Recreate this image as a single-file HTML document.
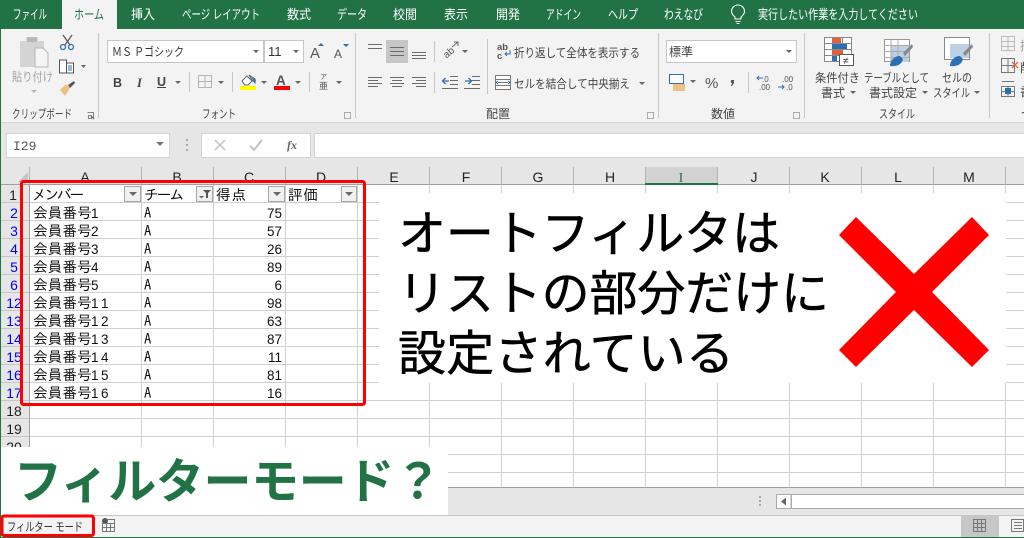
<!DOCTYPE html>
<html lang="ja"><head><meta charset="utf-8"><title>フィルターモード</title>
<style>
html,body{margin:0;padding:0;background:#fff;width:1024px;height:538px;overflow:hidden}
svg{display:block}
text{font-family:"Liberation Sans","Noto Sans CJK JP",sans-serif;white-space:pre}
.u{font-size:12px;fill:#444}
.g{fill:#a3a3a3}
.t{font-size:13px;fill:#fff}
.c{font-family:"IPAGothic","Noto Sans CJK JP",sans-serif;font-size:14.67px;fill:#111}
.d{font-family:"Liberation Sans",sans-serif;font-size:13.5px}
.h{font-family:"Liberation Sans",sans-serif;font-size:14px;fill:#222;text-anchor:middle}
.r{font-family:"Liberation Sans",sans-serif;font-size:14px;fill:#222;text-anchor:middle}
.b{fill:#0000ff}
.n{text-anchor:end}
.big{font-family:"Noto Sans CJK JP",sans-serif;font-size:48px;font-weight:400;fill:#000;stroke:#000;stroke-width:.5px}
.sep{stroke:#c6c6c6;stroke-width:1;fill:none}
.ic{stroke:#6a6a6a;stroke-width:1;fill:none}
.grid{stroke:#d0d0d0;stroke-width:1;fill:none}
</style></head><body>
<svg xmlns="http://www.w3.org/2000/svg" width="1024" height="538" viewBox="0 0 1024 538">
<!-- base -->
<rect width="1024" height="538" fill="#fff"/>
<rect x="0" y="29" width="1024" height="93" fill="#f3f3f3"/>
<rect x="0" y="122" width="1024" height="62" fill="#e6e6e6"/>
<rect x="0" y="122" width="1024" height="1" fill="#d2d2d2"/>
<!-- title tabs -->
<rect width="1024" height="29" fill="#217346"/>
<rect x="62" y="0" width="55" height="29" fill="#f3f3f3"/>
<text class="t" x="13" y="19" textLength="34" lengthAdjust="spacingAndGlyphs">ファイル</text>
<text class="t" x="74" y="19" textLength="30" lengthAdjust="spacingAndGlyphs" style="fill:#217346">ホーム</text>
<text class="t" x="131" y="19" textLength="24" lengthAdjust="spacingAndGlyphs">挿入</text>
<text class="t" x="182" y="19" textLength="78" lengthAdjust="spacingAndGlyphs">ページ レイアウト</text>
<text class="t" x="287" y="19" textLength="24" lengthAdjust="spacingAndGlyphs">数式</text>
<text class="t" x="337" y="19" textLength="30" lengthAdjust="spacingAndGlyphs">データ</text>
<text class="t" x="393" y="19" textLength="24" lengthAdjust="spacingAndGlyphs">校閲</text>
<text class="t" x="444" y="19" textLength="24" lengthAdjust="spacingAndGlyphs">表示</text>
<text class="t" x="496" y="19" textLength="24" lengthAdjust="spacingAndGlyphs">開発</text>
<text class="t" x="546" y="19" textLength="35" lengthAdjust="spacingAndGlyphs">アドイン</text>
<text class="t" x="608" y="19" textLength="30" lengthAdjust="spacingAndGlyphs">ヘルプ</text>
<text class="t" x="664" y="19" textLength="39" lengthAdjust="spacingAndGlyphs">わえなび</text>
<path d="M735 17c-2.500-2-3.500-3.500-3.500-5.500a6.500 6.500 0 0 1 13 0c0 2-1 3.500-3.500 5.500v2h-6zM735.500 21.500h5M736.500 23.500h3" stroke="#fff" fill="none" stroke-width="1.100"/>
<text class="t" x="758" y="19" textLength="160" lengthAdjust="spacingAndGlyphs">実行したい作業を入力してください</text>

<!-- separators -->
<path class="sep" d="M98.500 33v85M355.500 33v85M658.500 33v85M804.500 33v85M989.500 33v85M189.500 72v20M232.500 72v20M309.500 72v20M434.500 41v21M434.500 72v21M487.500 39v55M748.500 72v21"/>

<!-- clipboard -->
<path d="M20 41h6v-3h12v3h6v26H20z" fill="#d4d4d4"/>
<rect x="27" y="37" width="10" height="5" fill="#b8b8b8"/>
<path d="M35 48h8l5 5v14H35z" fill="#f5f5f5" stroke="#b4b4b4"/>
<text class="u g" x="12" y="81" textLength="41" lengthAdjust="spacingAndGlyphs">貼り付け</text>
<path d="M31 90h6l-3 3z" fill="#b5b5b5"/>
<path d="M63 35l7 10M72 35l-7 10" stroke="#5b5b5b" stroke-width="1.300" fill="none"/>
<circle cx="63" cy="47" r="2.500" fill="none" stroke="#2b70b5" stroke-width="1.300"/><circle cx="71" cy="47" r="2.500" fill="none" stroke="#2b70b5" stroke-width="1.300"/>
<path d="M59.500 60h7v13h-7zM66.500 63h7v10h-7z" fill="#fff" stroke="#555"/>
<path d="M68 66h4M68 68h4M68 70h4" stroke="#2b70b5"/>
<path d="M81 65h5l-2.500 3z" fill="#666"/>
<path d="M60 90l6-6 4 4-5 8z" fill="#eec084"/><path d="M68 85l6-4 1 2-5 5z" fill="#555"/>

<text class="u" x="12" y="118" textLength="60" lengthAdjust="spacingAndGlyphs">クリップボード</text>
<path d="M87.500 112.500h6v6M88.500 115.500h3v3h-3z" fill="none" stroke="#888"/>
<path d="M91 116l3 3" stroke="#555"/>

<!-- font -->
<rect x="107.500" y="40.500" width="156" height="22" fill="#fff" stroke="#c6c6c6"/>
<rect x="264.500" y="40.500" width="39" height="22" fill="#fff" stroke="#c6c6c6"/>
<text x="112" y="56" font-size="12" fill="#333" textLength="72" lengthAdjust="spacingAndGlyphs" style="font-family:'Noto Sans CJK JP',sans-serif">ＭＳ Ｐゴシック</text>
<path d="M253 50h6l-3 3zM293 50h6l-3 3z" fill="#666"/>
<text x="268" y="56" font-size="13" fill="#333" style="font-family:'Liberation Sans',sans-serif">11</text>
<text x="310" y="58" font-size="15" fill="#555">A</text><path d="M318 46l3-3 3 3z" fill="#2b70b5"/>
<text x="334" y="58" font-size="12" fill="#555">A</text><path d="M343 44l3 3 3-3z" fill="#2b70b5"/>
<text x="113" y="87" font-size="12.500" font-weight="bold" fill="#444">B</text>
<text x="137" y="87" font-size="12.500" font-weight="bold" font-style="italic" fill="#444" style="font-family:'Liberation Serif',serif">I</text>
<text x="157" y="86" font-size="12.500" font-weight="bold" fill="#444">U</text><rect x="157" y="87" width="9" height="1" fill="#444"/>
<path d="M175 81h6l-3 3zM218 81h6l-3 3zM261 81h6l-3 3zM295 81h6l-3 3zM336 81h6l-3 3z" fill="#666"/>
<path d="M198.500 75.500h13v12h-13zM205 75.500v12M198.500 81.500h13" fill="none" stroke="#777" stroke-dasharray="1 1"/>
<path d="M242 81l5-5 5 5-4 4h-3zM249 75l6 4v4l-3-3z" fill="#fff" stroke="#666"/><path d="M251 77l5 3-1 3z" fill="#2b70b5"/>
<rect x="240" y="86" width="16" height="4" fill="#ffff00"/>
<text x="276" y="85" font-size="13.500" font-weight="bold" fill="#555">A</text>
<rect x="274" y="86" width="16" height="4" fill="#ff0000"/>
<text x="320" y="79" font-size="7" fill="#555">ア</text><text x="319" y="89" font-size="9" fill="#555">亜</text>
<text class="u" x="202" y="118" textLength="34" lengthAdjust="spacingAndGlyphs">フォント</text>
<path d="M344.500 112.500h6v6h-6z" fill="none" stroke="#aaa"/>

<!-- alignment -->
<rect x="386" y="40" width="22" height="23" fill="#c6c6c6"/>
<path class="ic" d="M368 44.500h14M368 48.500h14M390 47.500h14M390 51.500h14M390 55.500h14M412 52.500h14M412 55.500h14M412 58.500h14"/>
<path class="ic" d="M368 77.500h14M368 80.500h10M368 83.500h14M368 86.500h10M390 77.500h14M392 80.500h10M390 83.500h14M392 86.500h10M412 77.500h14M416 80.500h10M412 83.500h14M416 86.500h10"/>
<text x="443" y="57" font-size="10" fill="#555" transform="rotate(-40 447 53)">ab</text>
<path d="M452 47l6-5M454 42h4v4" stroke="#666" fill="none"/>
<path d="M462 50h6l-3 3zM690 80h6l-3 3zM639 82h6l-3 3z" fill="#666"/>
<path class="ic" d="M442 75.500h0M450 76.500h8M450 80.500h8M450 84.500h8M442 88.500h16M472 76.500h8M472 80.500h8M472 84.500h8M464 88.500h16"/>
<path d="M449 81h-6M445.500 78l-3 3 3 3M465 81h6M468.500 78l3 3-3 3" stroke="#2b70b5" fill="none" stroke-width="1.300"/>
<text x="497" y="50" font-size="9.500" fill="#555" font-weight="bold">ab</text><text x="497" y="59" font-size="9.500" fill="#555" font-weight="bold">c</text>
<path d="M510 50v4h-5M507 52l-2 2 2 2" stroke="#2b70b5" fill="none"/>
<text class="u" x="514" y="57" textLength="126" lengthAdjust="spacingAndGlyphs">折り返して全体を表示する</text>
<path d="M495.500 75.500h15v14h-15zM495.500 79.500h15M495.500 85.500h15M498 82.500h10" fill="#fafafa" stroke="#777"/>
<path d="M498 81l-2 1.500 2 1.500M508 81l2 1.500-2 1.500" stroke="#2b70b5" fill="none"/>
<text class="u" x="514" y="88" textLength="116" lengthAdjust="spacingAndGlyphs">セルを結合して中央揃え</text>
<text class="u" x="486" y="118" textLength="24" lengthAdjust="spacingAndGlyphs">配置</text>
<path d="M647.500 112.500h6v6h-6z" fill="none" stroke="#aaa"/>

<!-- number -->
<rect x="666.500" y="40.500" width="130" height="22" fill="#fff" stroke="#c6c6c6"/>
<text x="669" y="56" font-size="12" fill="#444" textLength="24" lengthAdjust="spacingAndGlyphs">標準</text>
<path d="M786 50h6l-3 3z" fill="#666"/>
<rect x="669.500" y="74.500" width="14" height="9" fill="#fff" stroke="#2b70b5"/>
<rect x="673" y="84" width="12" height="7" fill="#eec084"/>
<text x="705" y="88" font-size="15" fill="#555">%</text>
<path d="M731 80h3v3l-2 3h-1l1-3h-1z" fill="#555"/>
<text x="762" y="82" font-size="8" fill="#555">.0</text><text x="759" y="90" font-size="8" fill="#555">.00</text>
<text x="782" y="82" font-size="8" fill="#555">.00</text><text x="786" y="90" font-size="8" fill="#555">.0</text>
<path d="M763 78h-6M759 76l-2 2 2 2M778 87h6M782 85l2 2-2 2" stroke="#2b70b5" fill="none"/>
<text class="u" x="711" y="118" textLength="24" lengthAdjust="spacingAndGlyphs">数値</text>
<path d="M793.500 112.500h6v6h-6z" fill="none" stroke="#aaa"/>

<!-- styles -->
<path d="M824.500 37.500h27v24h-27zM824.500 43.500h27M824.500 49.500h27M824.500 55.500h27M833.500 37.500v24M842.500 37.500v24" fill="#fff" stroke="#888"/>
<rect x="832" y="38" width="9" height="5" fill="#e0623c"/><rect x="832" y="44" width="15" height="5" fill="#2b70b5"/><rect x="832" y="50" width="11" height="5" fill="#e0623c"/><rect x="832" y="56" width="5" height="5" fill="#2b70b5"/>
<rect x="839.500" y="54.500" width="14" height="11" fill="#fff" stroke="#555"/>
<text x="843" y="64" font-size="10" fill="#333">≠</text>
<path d="M884.500 39.500h25v22h-25z" fill="#fff" stroke="#999"/>
<rect x="891" y="45" width="18" height="17" fill="#bed0e4"/>
<path d="M884.500 45.500h25M884.500 51.500h25M884.500 57.500h25M891 39.500v22M898 39.500v22" stroke="#aaa" fill="none"/>
<path d="M903 53l9-9 1 3-8 9z" fill="#888"/><path d="M890 66c0-5 4-10 10-10l3 3c-1 5-6 8-13 7z" fill="#2b70b5"/>
<path d="M944.500 37.500h25v22h-25z" fill="#fff" stroke="#888"/>
<rect x="950" y="44" width="19" height="14" fill="#bed0e4"/>
<path d="M963 53l9-9 1 3-8 9z" fill="#888"/><path d="M950 66c0-5 4-10 10-10l3 3c-1 5-6 8-13 7z" fill="#2b70b5"/>
<text class="u" x="815" y="82" textLength="45" lengthAdjust="spacingAndGlyphs">条件付き</text>
<text class="u" x="821" y="97" textLength="24" lengthAdjust="spacingAndGlyphs">書式</text>
<text class="u" x="864" y="82" textLength="65" lengthAdjust="spacingAndGlyphs">テーブルとして</text>
<text class="u" x="869" y="97" textLength="48" lengthAdjust="spacingAndGlyphs">書式設定</text>
<text class="u" x="942" y="82" textLength="30" lengthAdjust="spacingAndGlyphs">セルの</text>
<text class="u" x="933" y="97" textLength="37" lengthAdjust="spacingAndGlyphs">スタイル</text>
<path d="M850 91h6l-3 3zM922 91h6l-3 3zM974 91h6l-3 3z" fill="#666"/>
<text class="u" x="879" y="118" textLength="36" lengthAdjust="spacingAndGlyphs">スタイル</text>
<!-- cells group -->
<path d="M1001.500 36.500h13v14h-13zM1001.500 41.500h13M1001.500 46.500h13M1008 36.500v14" stroke="#bbb" fill="none"/>
<path d="M1001.500 58.500h13v14h-13zM1001.500 65.500h13M1008 58.500v14" stroke="#777" fill="none"/><path d="M1012 62l6 6M1018 62l-6 6" stroke="#e0623c" stroke-width="1.300"/>
<path d="M1001.500 86.500h13v10h-13zM1001.500 91.500h13M1008 86.500v10M1002 81.500h12" stroke="#777" fill="none"/><rect x="1005" y="88" width="6" height="6" fill="#2b70b5"/>
<text class="u g" x="1020" y="50">挿</text><text class="u" x="1020" y="72">削</text><text class="u" x="1020" y="96">書</text>
<text class="u" x="1021" y="118">セ</text>

<!-- formula bar -->
<rect x="6.500" y="133.500" width="163" height="24" fill="#fff" stroke="#d4d4d4"/>
<text x="13" y="150" font-size="13" fill="#555" style="font-family:'Liberation Mono',monospace">I29</text>
<path d="M156 142h8l-4 4z" fill="#777"/>
<path d="M186 139h2v2h-2zM186 144h2v2h-2zM186 149h2v2h-2z" fill="#aaa"/>
<rect x="201.500" y="133.500" width="109" height="24" fill="#fff" stroke="#d4d4d4"/>
<rect x="314.500" y="133.500" width="720" height="24" fill="#fff" stroke="#d4d4d4"/>
<path d="M215 140l10 10M225 140l-10 10" stroke="#c2c2c2" stroke-width="1.500"/>
<path d="M250 146l4 4 8-10" stroke="#c2c2c2" stroke-width="2" fill="none"/>
<text x="287" y="149" font-size="12" font-style="italic" font-weight="bold" fill="#666" style="font-family:'Liberation Serif',serif">fx</text>

<!-- grid -->
<path class="grid" d="M29.500 184v263M141.500 184v263M213.500 184v263M285.500 184v263M357.500 184v263M429.500 184v263M501.500 184v303M573.500 184v303M645.500 184v303M717.500 184v303M789.500 184v303M861.500 184v303M933.500 184v303M1005.500 184v303"/>
<path class="grid" d="M30 202.500h994M30 220.500h994M30 238.500h994M30 256.500h994M30 274.500h994M30 292.500h994M30 310.500h994M30 328.500h994M30 346.500h994M30 364.500h994M30 382.500h994M30 400.500h994M30 418.500h994M30 436.500h994M30 454.500h994M30 472.500h994"/>

<!-- headers -->
<rect x="1" y="167" width="1023" height="17" fill="#e6e6e6"/>
<rect x="1" y="184" width="28" height="263" fill="#e6e6e6"/>
<rect x="646" y="167" width="71" height="17" fill="#d2d2d2"/>
<path d="M18 182h10v-10z" fill="#c4c4c4"/>
<path d="M29.500 167v18M141.500 167v17M213.500 167v17M285.500 167v17M357.500 167v17M429.500 167v17M501.500 167v17M573.500 167v17M645.500 167v17M717.500 167v17M789.500 167v17M861.500 167v17M933.500 167v17M1005.500 167v17" stroke="#b4b4b4"/>
<rect x="0" y="184" width="1024" height="1" fill="#a0a0a0"/>
<rect x="29" y="184" width="1" height="263" fill="#a0a0a0"/>
<path d="M1 202.500h28M1 220.500h28M1 238.500h28M1 256.500h28M1 274.500h28M1 292.500h28M1 310.500h28M1 328.500h28M1 346.500h28M1 364.500h28M1 382.500h28M1 400.500h28M1 418.500h28M1 436.500h28" stroke="#c6c6c6"/>
<rect x="645" y="183" width="73" height="2" fill="#217346"/>
<g>
<text class="h" x="85" y="182">A</text><text class="h" x="177" y="182">B</text><text class="h" x="249" y="182">C</text><text class="h" x="321" y="182">D</text><text class="h" x="394" y="182">E</text><text class="h" x="466" y="182">F</text><text class="h" x="538" y="182">G</text><text class="h" x="610" y="182">H</text><text class="h" x="681" y="182" style="fill:#217346;font-family:'Liberation Serif',serif">I</text><text class="h" x="754" y="182">J</text><text class="h" x="825" y="182">K</text><text class="h" x="898" y="182">L</text><text class="h" x="969" y="182">M</text>
</g>
<text class="r" x="13" y="200">1</text>
<text class="r b" x="14" y="218">2</text><text class="r b" x="14" y="236">3</text><text class="r b" x="14" y="254">4</text><text class="r b" x="14" y="272">5</text><text class="r b" x="14" y="290">6</text>
<text class="r b" x="14" y="308">12</text><text class="r b" x="14" y="326">13</text><text class="r b" x="14" y="344">14</text><text class="r b" x="14" y="362">15</text><text class="r b" x="14" y="380">16</text><text class="r b" x="14" y="398">17</text>
<text class="r" x="14" y="416">18</text><text class="r" x="14" y="434">19</text><text class="r" x="14" y="452">20</text>

<!-- cells -->
<text class="c" x="32" y="200" textLength="52" lengthAdjust="spacing">メンバー</text>
<text class="c" x="144" y="200" textLength="40" lengthAdjust="spacing">チーム</text>
<text class="c" x="216" y="200" textLength="30" lengthAdjust="spacing">得点</text>
<text class="c" x="288" y="200" textLength="30" lengthAdjust="spacing">評価</text>
<text class="c" x="33" y="218">会員番号<tspan class="d" x="91">1</tspan></text><text class="c" x="144" y="218">A</text><text class="c n d" x="282" y="218">75</text>
<text class="c" x="33" y="236">会員番号<tspan class="d" x="91">2</tspan></text><text class="c" x="144" y="236">A</text><text class="c n d" x="282" y="236">57</text>
<text class="c" x="33" y="254">会員番号<tspan class="d" x="91">3</tspan></text><text class="c" x="144" y="254">A</text><text class="c n d" x="282" y="254">26</text>
<text class="c" x="33" y="272">会員番号<tspan class="d" x="91">4</tspan></text><text class="c" x="144" y="272">A</text><text class="c n d" x="282" y="272">89</text>
<text class="c" x="33" y="290">会員番号<tspan class="d" x="91">5</tspan></text><text class="c" x="144" y="290">A</text><text class="c n d" x="282" y="290">6</text>
<text class="c" x="33" y="308">会員番号<tspan class="d" x="91 101">11</tspan></text><text class="c" x="144" y="308">A</text><text class="c n d" x="282" y="308">98</text>
<text class="c" x="33" y="326">会員番号<tspan class="d" x="91 101">12</tspan></text><text class="c" x="144" y="326">A</text><text class="c n d" x="282" y="326">63</text>
<text class="c" x="33" y="344">会員番号<tspan class="d" x="91 101">13</tspan></text><text class="c" x="144" y="344">A</text><text class="c n d" x="282" y="344">87</text>
<text class="c" x="33" y="362">会員番号<tspan class="d" x="91 101">14</tspan></text><text class="c" x="144" y="362">A</text><text class="c n d" x="282" y="362">11</text>
<text class="c" x="33" y="380">会員番号<tspan class="d" x="91 101">15</tspan></text><text class="c" x="144" y="380">A</text><text class="c n d" x="282" y="380">81</text>
<text class="c" x="33" y="398">会員番号<tspan class="d" x="91 101">16</tspan></text><text class="c" x="144" y="398">A</text><text class="c n d" x="282" y="398">16</text>

<!-- filter buttons -->
<g fill="#f0f0f0" stroke="#a8a8a8">
<rect x="124.500" y="186.500" width="16" height="15"/><rect x="196.500" y="186.500" width="16" height="15"/><rect x="268.500" y="186.500" width="16" height="15"/><rect x="341.500" y="186.500" width="15" height="15"/>
</g>
<path d="M129 192h8l-4 4zM273 192h8l-4 4zM345 192h8l-4 4z" fill="#666"/>
<path d="M199 196h5l-2.500 2.500z" fill="#666"/>
<path d="M203 190h8l-3 3v5h-2v-5z" fill="#555"/>

<!-- overlays -->
<rect x="379" y="193" width="627" height="190" fill="#fff"/>
<rect x="21.500" y="181.500" width="343" height="223" rx="2" fill="none" stroke="#ff0000" stroke-width="3"/>
<text class="big" x="398" y="250" textLength="382" lengthAdjust="spacing">オートフィルタは</text>
<text class="big" x="398" y="310" textLength="431" lengthAdjust="spacing">リストの部分だけに</text>
<text class="big" x="398" y="370" textLength="336" lengthAdjust="spacing">設定されている</text>
<path d="M856 217L914 274L972 217L989 235L932 292L989 350L972 367L914 310L856 367L839 350L896 292L839 235Z" fill="#ff0000"/>

<!-- sheet bar -->
<rect x="0" y="487" width="1024" height="29" fill="#e6e6e6"/>
<rect x="0" y="487" width="1024" height="1" fill="#a0a0a0"/>
<path d="M759 496h2v2h-2zM759 500h2v2h-2zM759 504h2v2h-2z" fill="#a8a8a8"/>
<rect x="776.500" y="494.500" width="260" height="14" fill="#fff" stroke="#ababab"/>
<rect x="790.500" y="495" width="1.500" height="14" fill="#ababab"/>
<path d="M781 501.500l5-4v8z" fill="#666"/>
<!-- status bar -->
<rect x="0" y="515" width="1024" height="23" fill="#f3f3f3"/>
<rect x="0" y="515" width="1024" height="1" fill="#c6c6c6"/>
<rect x="961" y="516" width="38" height="21" fill="#c6c6c6"/>
<path d="M973.500 519.500h12v12h-12zM973.500 523.500h12M973.500 527.500h12M977.500 519.500v12M981.500 519.500v12" fill="none" stroke="#777"/>
<path d="M1011.500 519.500h12v12h-12zM1014 522.500h8M1014 525.500h8M1014 528.500h8" fill="none" stroke="#777"/>
<text x="7" y="531" font-size="12" fill="#333" textLength="76" lengthAdjust="spacingAndGlyphs">フィルター モード</text>
<circle cx="105" cy="521" r="3" fill="#555"/>
<path d="M102.500 523.500h12v8h-12zM106.500 519.500h8v4M102.500 527.500h12M106.500 523.500v8M110.500 523.500v8" fill="none" stroke="#777"/>
<rect x="0" y="537" width="1024" height="1" fill="#217346"/>
<rect x="0" y="29" width="1" height="509" fill="#217346"/>

<!-- green caption -->
<rect x="1" y="447" width="447" height="68" fill="#fff"/>
<text x="14" y="498" font-size="48" font-weight="700" fill="#217346" textLength="428" lengthAdjust="spacing" style="font-family:'Noto Sans CJK JP',sans-serif">フィルターモード？</text>
<rect x="2" y="516" width="91.500" height="19.500" rx="2" fill="none" stroke="#ff0000" stroke-width="3"/>
</svg>
</body></html>
